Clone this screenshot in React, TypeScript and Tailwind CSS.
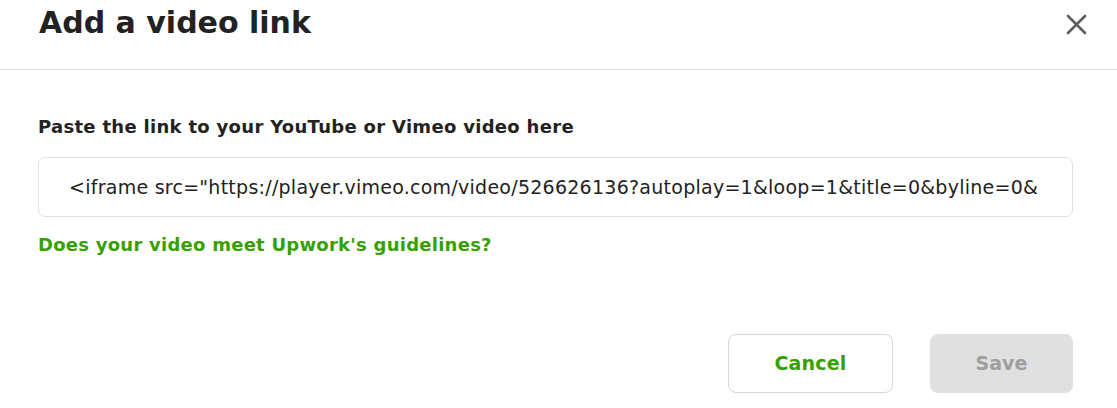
export default function App() {
  return (
    <div
      className="h-[408px] w-[1117px] overflow-hidden bg-white text-[#222]"
      style={{ fontFamily: '"DejaVu Sans", "Noto Sans", sans-serif' }}
    >
      {/* Header */}
      <div className="flex h-[70px] items-start justify-between border-b border-[#e0e0e0] pl-[39px] pr-[30px]">
        <h2 className="mt-[3px] text-[30px] font-bold leading-[40px] text-[#222]">
          Add a video link
        </h2>
        <button className="mt-[14px] flex h-[21px] w-[21px] items-center justify-center text-[#5e5e5e]">
          <svg width="21" height="21" viewBox="0 0 21 21" fill="none" stroke="currentColor" strokeWidth="2.6" strokeLinecap="round">
            <path d="M2 2L19 19M19 2L2 19" />
          </svg>
        </button>
      </div>

      {/* Body */}
      <div className="flex flex-col px-[38px] pt-[45px]">
        <label className="text-[18px] font-semibold leading-6 tracking-[0.3px] text-[#222]">
          Paste the link to your YouTube or Vimeo video here
        </label>
        <div className="mt-[18px] flex h-[60px] w-[1035px] items-center overflow-hidden rounded-[7px] border border-[#e0e0e0] pl-[30px] pr-[33px]">
          <input
            readOnly
            value={'<iframe src="https://player.vimeo.com/video/526626136?autoplay=1&loop=1&title=0&byline=0&portrait=0" width="640" height="360" frameborder="0"></iframe>'}
            className="w-full bg-transparent text-[19px] tracking-[0.26px] text-[#222] outline-none"
          />
        </div>
        <a className="mt-[16px] text-[18px] font-semibold leading-6 tracking-[0.25px] text-[#37a000]">
          Does your video meet Upwork's guidelines?
        </a>
      </div>

      {/* Actions */}
      <div className="mt-[77px] flex justify-end gap-[37px] pr-[44px]">
        <button className="h-[59px] w-[165px] rounded-[8px] border border-[#d5d5d5] bg-white text-[19px] font-bold tracking-[0.2px] text-[#37a000]">
          Cancel
        </button>
        <button
          disabled
          className="h-[59px] w-[143px] rounded-[8px] bg-[#e0e0e0] text-[19px] font-bold text-[#9e9e9e]"
        >
          Save
        </button>
      </div>
    </div>
  )
}
